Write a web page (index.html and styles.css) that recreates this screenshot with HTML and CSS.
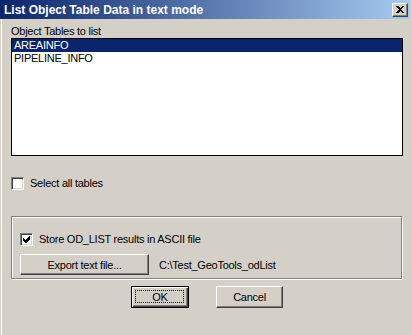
FILE: index.html
```html
<!DOCTYPE html>
<html lang="en">
<head>
    <meta charset="UTF-8">
    <title>List Object Table Data in text mode</title>
    <link rel="stylesheet" href="styles.css">
</head>
<body>
    <div class="dialog">
        <div class="titlebar">
            <span class="title">List Object Table Data in text mode</span>
            <span class="close-btn">
                <svg width="8" height="7" viewBox="0 0 8 7" shape-rendering="crispEdges">
                    <polygon points="0,0 2,0 4,2 6,0 8,0 5,3.5 8,7 6,7 4,5 2,7 0,7 3,3.5" fill="#000"/>
                </svg>
            </span>
        </div>
        <div class="content">
            <div class="label">Object Tables to list</div>
            <div class="listbox">
                <div class="item selected">AREAINFO</div>
                <div class="item">PIPELINE_INFO</div>
            </div>

            <label class="check-row select-all">
                <span class="checkbox"></span>
                <span>Select all tables</span>
            </label>

            <div class="groupbox">
                <label class="check-row">
                    <span class="checkbox">
                        <svg width="7" height="7" viewBox="0 0 7 7" shape-rendering="crispEdges">
                            <polygon points="0,2 2,4 6,0 7,0 7,3 3,7 2,7 0,5" fill="#000"/>
                        </svg>
                    </span>
                    <span>Store OD_LIST results in ASCII file</span>
                </label>
                <div class="export-row">
                    <span class="btn export-btn">Export text file...</span>
                    <span class="path">C:\Test_GeoTools_odList</span>
                </div>
            </div>

            <div class="buttons">
                <span class="btn ok-btn">OK</span>
                <span class="btn cancel-btn">Cancel</span>
            </div>
        </div>
    </div>
</body>
</html>
```

FILE: styles.css
```css
body {
    margin: 0;
    padding: 0;
    background-color: #d4d0c8;
    font-family: "Liberation Sans", Arial, sans-serif;
    font-size: 11px;
    letter-spacing: -0.25px;
    color: #000;
}
.dialog {
    width: 412px;
    height: 335px;
    background: #d4d0c8;
    overflow: hidden;
}
.titlebar {
    width: 410px;
    height: 19px;
    box-sizing: border-box;
    padding-left: 4px;
    padding-right: 2px;
    display: flex;
    align-items: center;
    justify-content: space-between;
    background: linear-gradient(to right, #0a246a, #a6caf0);
}
.title {
    color: #fff;
    font-size: 12px;
    font-weight: bold;
    letter-spacing: 0;
}
.close-btn {
    width: 16px;
    height: 14px;
    box-sizing: border-box;
    display: flex;
    align-items: center;
    justify-content: center;
    background: #d4d0c8;
    border: 1px solid;
    border-color: #fff #404040 #404040 #fff;
    box-shadow: inset -1px -1px #808080;
}
.content {
    padding: 5px 0 0 9px;
    border-left: 1px solid #fff;
    margin-left: 1px;
    height: 316px;
    box-sizing: border-box;
}
.label {
    line-height: 14px;
}
.listbox {
    width: 392px;
    height: 118px;
    box-sizing: border-box;
    border: 1px solid #000;
    background: #fff;
}
.item {
    line-height: 13px;
    height: 13px;
    padding-left: 2px;
}
.item.selected {
    background: #0a246a;
    color: #fff;
}
.check-row {
    display: flex;
    align-items: center;
    gap: 6px;
    height: 13px;
    line-height: 13px;
}
.select-all {
    margin-top: 21px;
}
.checkbox {
    width: 13px;
    height: 13px;
    box-sizing: border-box;
    background: #fff;
    border: 1px solid;
    border-color: #808080 #fff #fff #808080;
    box-shadow: inset 1px 1px #404040, inset -1px -1px #d4d0c8;
    display: flex;
    align-items: center;
    justify-content: center;
}
.groupbox {
    margin-top: 26px;
    width: 391px;
    height: 63px;
    box-sizing: border-box;
    border: 1px solid #808080;
    box-shadow: inset 1px 1px #fff, 1px 1px #fff;
    padding: 16px 0 0 8px;
}
.export-row {
    display: flex;
    align-items: center;
    gap: 10px;
    margin-top: 8px;
}
.btn {
    display: flex;
    align-items: center;
    justify-content: center;
    box-sizing: border-box;
    background: #d4d0c8;
    border: 1px solid;
    border-color: #fff #404040 #404040 #fff;
    box-shadow: inset -1px -1px #808080;
}
.export-btn {
    width: 129px;
    height: 21px;
}
.buttons {
    display: flex;
    gap: 27px;
    margin-top: 7px;
    padding-left: 120px;
}
.ok-btn {
    position: relative;
    width: 58px;
    height: 22px;
    border: 1px solid #000;
    box-shadow: inset 1px 1px #fff, inset -1px -1px #404040, inset -2px -2px #808080;
}
.ok-btn::after {
    content: "";
    position: absolute;
    top: 3px;
    left: 3px;
    right: 4px;
    bottom: 4px;
    border: 1px dotted #000;
}
.cancel-btn {
    width: 67px;
    height: 22px;
}
```
